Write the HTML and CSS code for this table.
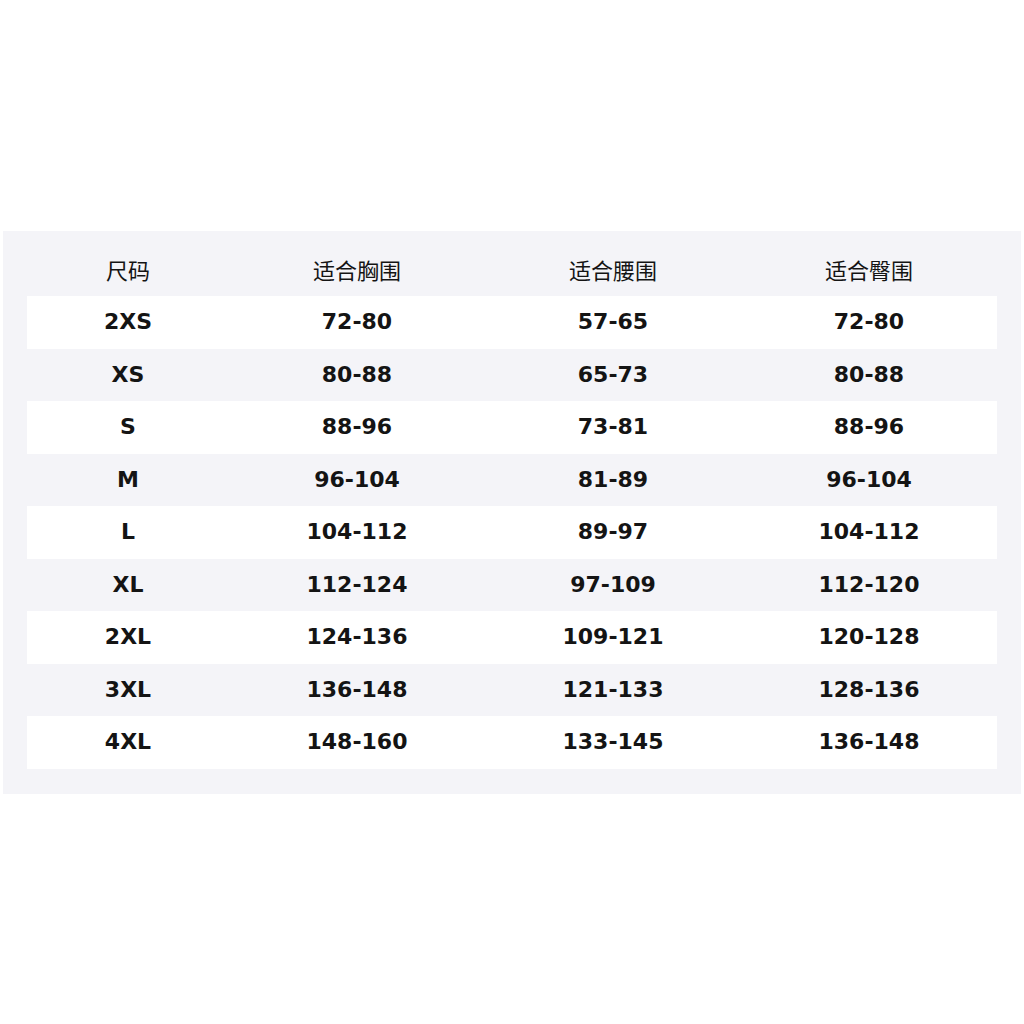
FILE: index.html
```html
<!DOCTYPE html>
<html lang="zh">
<head>
<meta charset="utf-8">
<title>尺码表</title>
<link rel="stylesheet" href="styles.css">
</head>
<body>
<div class="panel">
  <div class="row head">
    <div class="cell c1">尺码</div>
    <div class="cell">适合胸围</div>
    <div class="cell">适合腰围</div>
    <div class="cell">适合臀围</div>
  </div>
  <div class="row data white"><div class="cell c1">2XS</div><div class="cell">72-80</div><div class="cell">57-65</div><div class="cell">72-80</div></div>
  <div class="row data"><div class="cell c1">XS</div><div class="cell">80-88</div><div class="cell">65-73</div><div class="cell">80-88</div></div>
  <div class="row data white"><div class="cell c1">S</div><div class="cell">88-96</div><div class="cell">73-81</div><div class="cell">88-96</div></div>
  <div class="row data"><div class="cell c1">M</div><div class="cell">96-104</div><div class="cell">81-89</div><div class="cell">96-104</div></div>
  <div class="row data white"><div class="cell c1">L</div><div class="cell">104-112</div><div class="cell">89-97</div><div class="cell">104-112</div></div>
  <div class="row data"><div class="cell c1">XL</div><div class="cell">112-124</div><div class="cell">97-109</div><div class="cell">112-120</div></div>
  <div class="row data white"><div class="cell c1">2XL</div><div class="cell">124-136</div><div class="cell">109-121</div><div class="cell">120-128</div></div>
  <div class="row data"><div class="cell c1">3XL</div><div class="cell">136-148</div><div class="cell">121-133</div><div class="cell">128-136</div></div>
  <div class="row data white"><div class="cell c1">4XL</div><div class="cell">148-160</div><div class="cell">133-145</div><div class="cell">136-148</div></div>
</div>
</body>
</html>
```

FILE: styles.css
```css
html, body {
  margin: 0;
  padding: 0;
  background: #ffffff;
}
body {
  padding-top: 231px;
}
.panel {
  margin: 0 3px;
  width: 1018px;
  box-sizing: border-box;
  background: #f4f4f8;
  padding: 0 24px 25px;
}
.row {
  display: flex;
  align-items: center;
  color: #141414;
}
.cell {
  width: 256px;
  text-align: center;
}
.cell.c1 {
  width: 202px;
}
.head {
  height: 55px;
  padding-top: 10px;
  font-family: "Noto Sans CJK SC", "Noto Sans", sans-serif;
  font-size: 22px;
  line-height: 26px;
  font-weight: 400;
}
.data {
  height: 52.5px;
  font-family: "DejaVu Sans", "Noto Sans", sans-serif;
  font-weight: 700;
  font-size: 22px;
  line-height: 26px;
}
.white {
  background: #ffffff;
}
```
